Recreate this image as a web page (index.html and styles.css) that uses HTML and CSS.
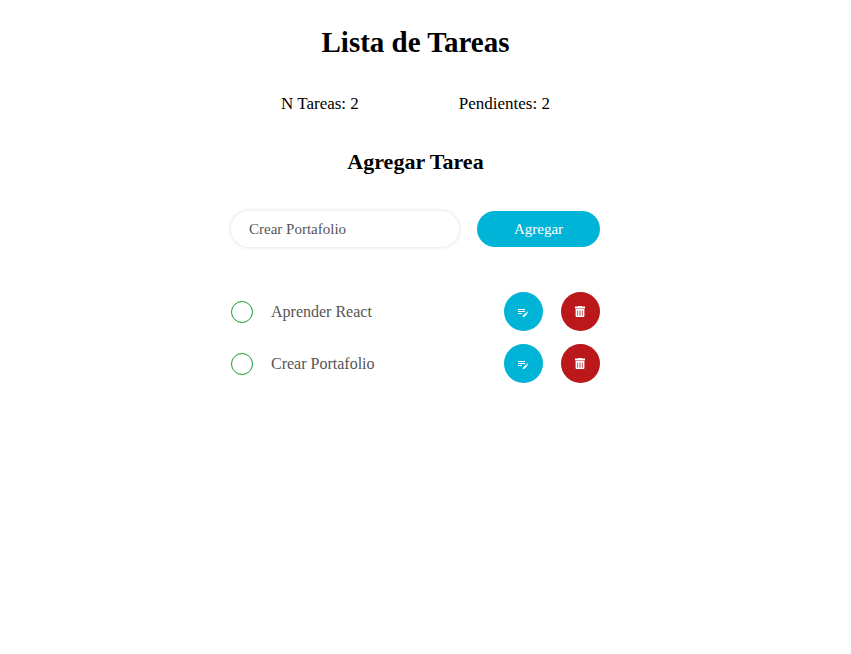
FILE: index.html
```html
<!DOCTYPE html>
<html lang="es">
<head>
<meta charset="utf-8">
<meta name="viewport" content="width=device-width, initial-scale=1">
<title>Lista de Tareas</title>
<link rel="stylesheet" href="styles.css">
</head>
<body>
<svg class="sprite">
  <symbol id="icon-edit" viewBox="0 0 13 13">
    <path d="M1 4h7v1H1zM1 6h7v1H1zM1 8h4v1H1zM5.8 12v-1.3L8.9 7.6l1.3 1.3L7.1 12zM9.4 7.1l.5-.5q.3-.3.5 0l.8.8q.3.3 0 .5l-.5.5z"/>
  </symbol>
  <symbol id="icon-trash" viewBox="0 0 13 13">
    <path fill-rule="evenodd" d="M4 1h4v.6h3V3.4H1V1.6h3zM1.6 4h8.8v7q0 1-1 1H2.6q-1 0-1-1zM3.4 5.4v5.4h.7V5.4zM5.6 5.4v5.4h.8V5.4zM7.9 5.4v5.4h.7V5.4z"/>
  </symbol>
</svg>
<main class="app">
  <h1 class="title">Lista de Tareas</h1>
  <div class="stats">
    <p class="stat">N Tareas: 2</p>
    <p class="stat">Pendientes: 2</p>
  </div>
  <h2 class="subtitle">Agregar Tarea</h2>
  <form class="form">
    <input class="field" type="text" aria-label="Nueva tarea" value="Crear Portafolio">
    <button class="add" type="button">Agregar</button>
  </form>
  <ul class="tasks">
    <li class="task">
      <input class="check" type="checkbox" id="task-1">
      <label class="name" for="task-1">Aprender React</label>
      <button class="action" type="button" aria-label="Editar"><svg class="icon"><use href="#icon-edit"/></svg></button>
      <button class="action delete" type="button" aria-label="Eliminar"><svg class="icon"><use href="#icon-trash"/></svg></button>
    </li>
    <li class="task">
      <input class="check" type="checkbox" id="task-2">
      <label class="name" for="task-2">Crear Portafolio</label>
      <button class="action" type="button" aria-label="Editar"><svg class="icon"><use href="#icon-edit"/></svg></button>
      <button class="action delete" type="button" aria-label="Eliminar"><svg class="icon"><use href="#icon-trash"/></svg></button>
    </li>
  </ul>
</main>
</body>
</html>
```
FILE: styles.css
```css
* {
  box-sizing: border-box;
}

body {
  margin: 0;
  padding: 24px 20px 24px 0;
  background: #fff;
  color: #000;
  font-family: "Liberation Serif", "Times New Roman", serif;
}

h1, h2, p, ul {
  margin: 0;
  padding: 0;
}

.sprite {
  display: none;
}

.app {
  max-width: 369px;
  margin: 0 auto;
}

.title {
  font-size: 29px;
  line-height: 36px;
  text-align: center;
}

.stats {
  display: flex;
  justify-content: center;
  gap: 100px;
  margin-top: 32px;
}

.stat {
  font-size: 17px;
  line-height: 24px;
}

.subtitle {
  margin-top: 32px;
  font-size: 22px;
  line-height: 28px;
  text-align: center;
}

.form {
  display: flex;
  gap: 18px;
  margin-top: 35px;
}

.field,
.add {
  height: 36px;
  border: 0;
  border-radius: 18px;
  font-family: inherit;
  font-size: 15px;
}

.field {
  flex: 1;
  min-width: 0;
  padding: 0 18px;
  background: #fff;
  color: #555;
  box-shadow: 0 0 4px rgba(0, 0, 0, 0.15);
  outline: 0;
}

.add {
  flex: 0 0 123px;
  background: #00b4d8;
  color: #fff;
  cursor: pointer;
}

.tasks {
  display: grid;
  gap: 13px;
  margin-top: 45px;
  list-style: none;
}

.task {
  display: flex;
  align-items: center;
  gap: 18px;
}

.check {
  appearance: none;
  width: 22px;
  height: 22px;
  margin: 0;
  border: 1px solid #1a9f32;
  border-radius: 50%;
}

.check:checked {
  background: #1a9f32;
}

.name {
  flex: 1;
  color: #555;
  font-size: 16px;
  line-height: 20px;
}

.action {
  display: grid;
  place-items: center;
  width: 39px;
  height: 39px;
  padding: 0;
  border: 0;
  border-radius: 50%;
  background: #00b4d8;
  color: #fff;
  cursor: pointer;
}

.delete {
  background: #ba181b;
}

.icon {
  width: 13px;
  height: 13px;
  fill: currentColor;
}
```
